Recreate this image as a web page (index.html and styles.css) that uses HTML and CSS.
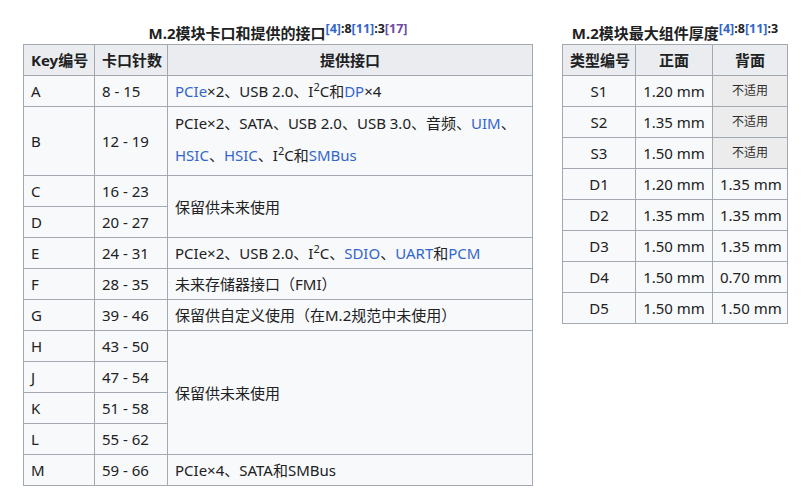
FILE: index.html
```html
<!DOCTYPE html>
<html lang="zh">
<head>
<meta charset="utf-8">
<title>M.2</title>
<link rel="stylesheet" href="styles.css">
</head>
<body>
<div class="page">
  <table class="wikitable keys">
    <caption>M.2模块卡口和提供的接口<sup><a class="ref">[4]</a>:8<a class="ref">[11]</a>:3<a class="ref visited">[17]</a></sup></caption>
    <colgroup><col class="k1"><col class="k2"><col class="k3"></colgroup>
    <thead>
      <tr><th>Key编号</th><th>卡口针数</th><th>提供接口</th></tr>
    </thead>
    <tbody>
      <tr><td>A</td><td>8 - 15</td><td><a class="lnk">PCIe</a>×2、USB 2.0、I<sup class="pow">2</sup>C和<a class="lnk">DP</a>×4</td></tr>
      <tr><td>B</td><td>12 - 19</td><td class="two">PCIe×2、SATA、USB 2.0、USB 3.0、音频、<a class="lnk">UIM</a>、<br><a class="lnk">HSIC</a>、<a class="lnk">HSIC</a>、I<sup class="pow">2</sup>C和<a class="lnk">SMBus</a></td></tr>
      <tr><td>C</td><td>16 - 23</td><td rowspan="2">保留供未来使用</td></tr>
      <tr><td>D</td><td>20 - 27</td></tr>
      <tr><td>E</td><td>24 - 31</td><td>PCIe×2、USB 2.0、I<sup class="pow">2</sup>C、<a class="lnk">SDIO</a>、<a class="lnk">UART</a>和<a class="lnk">PCM</a></td></tr>
      <tr><td>F</td><td>28 - 35</td><td>未来存储器接口（FMI）</td></tr>
      <tr><td>G</td><td>39 - 46</td><td>保留供自定义使用（在M.2规范中未使用）</td></tr>
      <tr><td>H</td><td>43 - 50</td><td rowspan="4">保留供未来使用</td></tr>
      <tr><td>J</td><td>47 - 54</td></tr>
      <tr><td>K</td><td>51 - 58</td></tr>
      <tr><td>L</td><td>55 - 62</td></tr>
      <tr><td>M</td><td>59 - 66</td><td>PCIe×4、SATA和SMBus</td></tr>
    </tbody>
  </table>

  <table class="wikitable thick">
    <caption>M.2模块最大组件厚度<sup><a class="ref">[4]</a>:8<a class="ref">[11]</a>:3</sup></caption>
    <colgroup><col class="t1"><col class="t2"><col class="t3"></colgroup>
    <thead>
      <tr><th>类型编号</th><th>正面</th><th>背面</th></tr>
    </thead>
    <tbody>
      <tr><td>S1</td><td>1.20 mm</td><td class="na">不适用</td></tr>
      <tr><td>S2</td><td>1.35 mm</td><td class="na">不适用</td></tr>
      <tr><td>S3</td><td>1.50 mm</td><td class="na">不适用</td></tr>
      <tr><td>D1</td><td>1.20 mm</td><td>1.35 mm</td></tr>
      <tr><td>D2</td><td>1.35 mm</td><td>1.35 mm</td></tr>
      <tr><td>D3</td><td>1.50 mm</td><td>1.35 mm</td></tr>
      <tr><td>D4</td><td>1.50 mm</td><td>0.70 mm</td></tr>
      <tr><td>D5</td><td>1.50 mm</td><td>1.50 mm</td></tr>
    </tbody>
  </table>
</div>
</body>
</html>
```

FILE: styles.css
```css
body {
  margin: 0;
  background: #ffffff;
  color: #202122;
  font-family: "Noto Sans", "Noto Sans CJK SC", sans-serif;
  font-size: 15px;
}

.page {
  display: flex;
  align-items: flex-start;
  gap: 29px;
  padding: 22px 0 0 23px;
}

.wikitable {
  border-collapse: collapse;
  table-layout: fixed;
}

.wikitable caption {
  font-weight: bold;
  line-height: 22px;
  text-align: center;
  white-space: nowrap;
}

.wikitable th,
.wikitable td {
  border: 1px solid #a2a9b1;
  padding: 4px 7px;
  line-height: 22px;
  background: #f8f9fa;
  vertical-align: middle;
  white-space: nowrap;
}

.wikitable th {
  background: #eaecf0;
  font-weight: bold;
  text-align: center;
}

.keys { width: 509px; }
.k1 { width: 71px; }
.k2 { width: 73px; }
.k3 { width: 365px; }

.keys td.two {
  line-height: 32px;
  padding: 0 7px 4px;
}

.thick { width: 225px; }
.t1 { width: 73px; }
.t2 { width: 77px; }
.t3 { width: 75px; }

.thick td { text-align: center; }

.thick td.na {
  background: #ececec;
  color: #2c2c2c;
  font-size: 12px;
}

sup {
  font-size: 11px;
  line-height: 0;
  vertical-align: super;
}

caption sup { font-size: 12.5px; }

.ref, .lnk { color: #3366cc; text-decoration: none; }
.ref.visited { color: #6b4ba1; }

sup.pow { font-size: 11px; }
```
